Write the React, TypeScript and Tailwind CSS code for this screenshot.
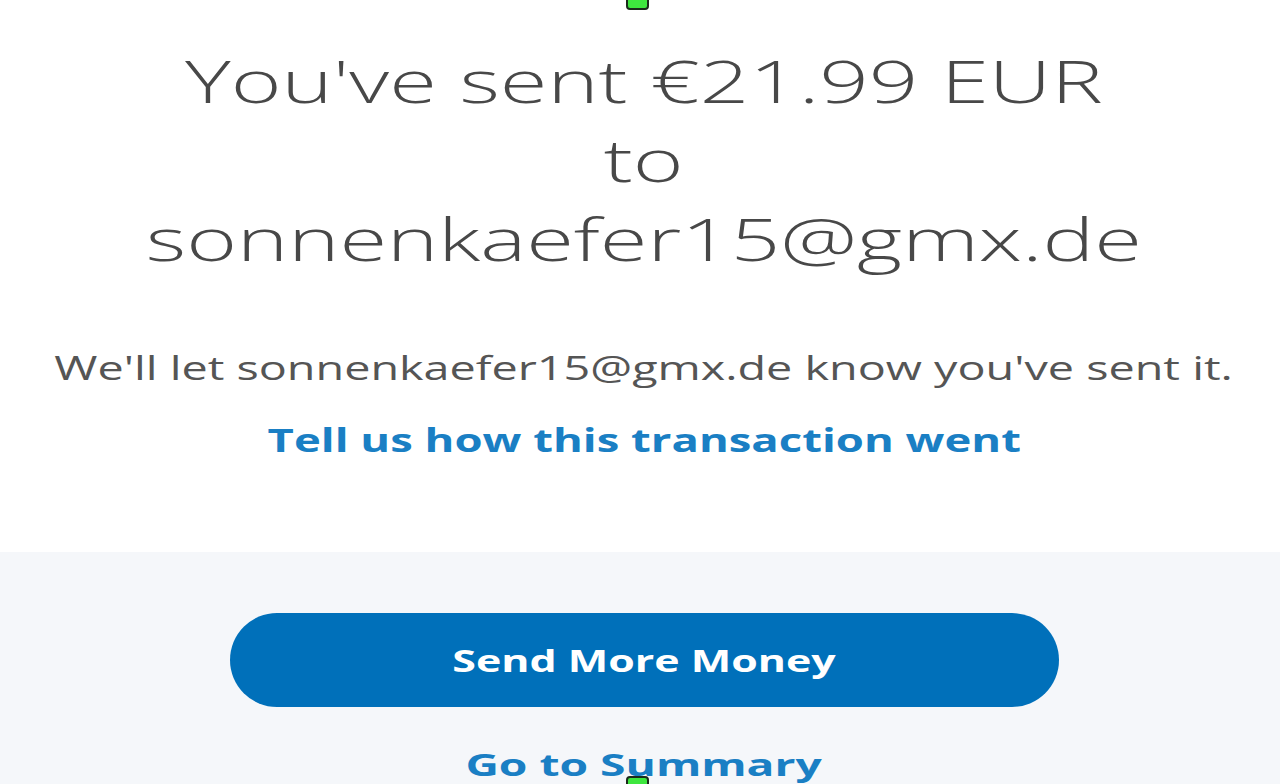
import React from 'react';

function Handle({ className }: { className: string }) {
  return (
    <div
      className={`absolute w-[23px] h-[18px] rounded-[4px] bg-[#3ee63e] border-2 border-[#1b2a1b] ${className}`}
    />
  );
}

export default function App() {
  return (
    <div
      className="relative w-[1280px] h-[784px] overflow-hidden bg-white"
      style={{ fontFamily: '"Open Sans", "Noto Sans", sans-serif' }}
    >
      {/* Confirmation message */}
      <section className="flex flex-col items-center pt-[41px] h-[552px] bg-white pl-[8px]">
        <h1 className="text-center text-[59px] leading-[79px] font-light text-[#484848] scale-x-147">
          You've sent €21.99 EUR
          <br />
          to
          <br />
          sonnenkaefer15@gmx.de
        </h1>
        <p className="mt-[70px] text-[32px] leading-[40px] text-[#555555] scale-x-146 whitespace-nowrap">
          We'll let sonnenkaefer15@gmx.de know you've sent it.
        </p>
        <a className="mt-[32px] text-[32px] leading-[40px] font-bold text-[#1a7fc4] scale-x-142 whitespace-nowrap">
          Tell us how this transaction went
        </a>
      </section>

      {/* Actions */}
      <section className="flex flex-col items-center bg-[#f5f7fa] h-[232px] pt-[61px] pl-[8px]">
        <button className="w-[829px] h-[97px] rounded-full bg-[#0070ba] text-white">
          <span className="inline-block text-[30px] font-bold scale-x-143">Send More Money</span>
        </button>
        <a className="mt-[37px] text-[31px] leading-[40px] font-bold text-[#1a7fc4] scale-x-149 whitespace-nowrap">
          Go to Summary
        </a>
      </section>

      <Handle className="left-[626px] -top-[8px]" />
      <Handle className="left-[626px] top-[776px]" />
    </div>
  );
}
